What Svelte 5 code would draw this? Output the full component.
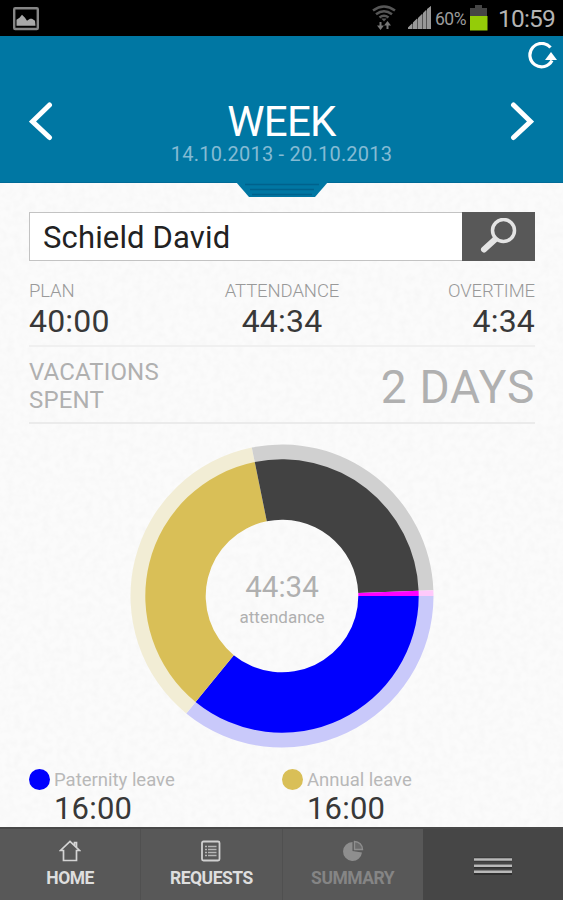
<script>
  const stats = [
    { label: 'PLAN', value: '40:00' },
    { label: 'ATTENDANCE', value: '44:34' },
    { label: 'OVERTIME', value: '4:34' }
  ];
  const leaves = [
    { label: 'Paternity leave', value: '16:00', color: '#0000fe' },
    { label: 'Annual leave', value: '16:00', color: '#d9bf57' }
  ];
  const slices = [
    { from: 0, to: 129.2, color: '#0000fe', halo: '#c9c9fa' },
    { from: 129.2, to: 258.5, color: '#d9bf57', halo: '#f2edd5' },
    { from: 258.5, to: 357.8, color: '#424242', halo: '#d0d0d0' },
    { from: 357.8, to: 360, color: '#ff00ff', halo: '#ffc9fb' }
  ];

  function point(r, deg) {
    const a = (deg * Math.PI) / 180;
    return `${(152 + r * Math.cos(a)).toFixed(2)} ${(152 + r * Math.sin(a)).toFixed(2)}`;
  }

  function ring(inner, outer, from, to) {
    const large = to - from > 180 ? 1 : 0;
    return `M${point(outer, from)}A${outer} ${outer} 0 ${large} 1 ${point(outer, to)}L${point(inner, to)}A${inner} ${inner} 0 ${large} 0 ${point(inner, from)}Z`;
  }
</script>

<div class="screen">
  <div class="status">
    <svg class="picture" width="28" height="24" viewBox="0 0 28 24">
      <rect x="2.2" y="1.2" width="23.6" height="20.8" rx="1" fill="#000" stroke="#858585" stroke-width="2.4" />
      <path d="M4.500 18.800v-6l3-2 2.500-3 3 3 2 3 3-2 2 0 3 2 .5 5z" fill="#a8a8a8" />
    </svg>
    <svg class="wifi" width="26" height="26" viewBox="0 0 26 26" fill="none">
      <path d="M2 5.5q11-8 22 0M5 9.2q8-6 16 0M8.500 12.500q4.500-3.500 9 0" stroke="#565656" stroke-width="2.5" />
      <path d="M10.300 13.500h5.400l-2.700 3z" fill="#565656" />
      <path d="M9.500 17v4M16.500 24v-5" stroke="#777" stroke-width="2" />
      <path d="M6 20.500h7l-3.500 4.500zM13 20.500h7l-3.500-4.500z" fill="#777" />
    </svg>
    <svg class="signal" width="24" height="24" viewBox="0 0 24 24">
      <path d="M0 23v-1L23 0v23z" fill="#555" />
      <path d="M0 23v-1.500l4-4v5.500zM5 23v-6.500l4-4v10.500zM10 23v-11l4-4v15zM15 23v-16l3-3v19zM19 23v-20l4-3v23z" fill="#989898" />
    </svg>
    <span class="percent">60%</span>
    <svg class="battery" width="18" height="26" viewBox="0 0 18 26">
      <path d="M5 0h7v3h5v9H0V3h5z" fill="#454545" />
      <rect y="11" width="17.500" height="14.500" fill="#94cc08" />
    </svg>
    <span class="clock">10:59</span>
  </div>

  <header>
    <svg class="refresh" width="30" height="28" viewBox="0 0 30 28" fill="none">
      <path d="M22.500 5.500A11.700 11.700 0 1 0 24 18.500" stroke="#fff" stroke-width="3.200" />
      <path d="M17 18h12l-6-8z" fill="#fff" />
    </svg>
    <svg class="arrow" width="24" height="40" viewBox="0 0 24 40">
      <path d="M20.500 4L3.500 20.500l17 16" fill="none" stroke="#fff" stroke-width="5" stroke-linecap="round" />
    </svg>
    <div class="period">
      <h1>WEEK</h1>
      <p>14.10.2013 - 20.10.2013</p>
    </div>
    <svg class="arrow" width="24" height="40" viewBox="0 0 24 40">
      <path d="M3.500 4l17 16.500l-17 16" fill="none" stroke="#fff" stroke-width="5" stroke-linecap="round" />
    </svg>
    <svg class="handle" width="92" height="15" viewBox="0 0 92 15">
      <path d="M0 0h92L79 15H13z" fill="#0077a3" />
      <path d="M9 2.500h74M14 7.500h64M16 12.500h60" stroke="#00628c" stroke-width="1.700" />
    </svg>
  </header>

  <main>
    <svg class="paper" width="563" height="644">
      <filter id="grain" x="0" y="0" width="100%" height="100%">
        <feTurbulence type="fractalNoise" baseFrequency="0.14" numOctaves="2" seed="4" />
        <feColorMatrix values="0 0 0 0 0.4  0 0 0 0 0.4  0 0 0 0 0.4  0.09 0 0 0 -0.03" />
      </filter>
      <rect width="563" height="644" filter="url(#grain)" />
    </svg>

    <div class="search">
      <div class="field">Schield David</div>
      <div class="go">
        <svg width="40" height="36" viewBox="0 0 40 36" fill="none" stroke="#e4e4e4">
          <circle cx="24.500" cy="12.500" r="11" stroke-width="3.500" />
          <path d="M16 21.500L5 31.500" stroke-width="6" stroke-linecap="round" />
        </svg>
      </div>
    </div>

    <div class="stats">
      {#each stats as s}
        <div class="stat">
          <span class="label">{s.label}</span>
          <span class="value">{s.value}</span>
        </div>
      {/each}
    </div>

    <div class="vacations">
      <span class="spent">VACATIONS<br />SPENT</span>
      <span class="days">2 DAYS</span>
    </div>

    <div class="chart">
      <svg width="304" height="304" viewBox="0 0 304 304">
        {#each slices as s}
          <path d={ring(136, 151.5, s.from, s.to)} fill={s.halo} />
          <path d={ring(76.300, 136.700, s.from, s.to)} fill={s.color} />
        {/each}
      </svg>
      <div class="total">
        <span class="hours">44:34</span>
        <span class="caption">attendance</span>
      </div>
    </div>

    <div class="legend">
      {#each leaves as l}
        <div class="leave">
          <i style:background={l.color}></i>
          <div>
            <span class="name">{l.label}</span>
            <span class="value">{l.value}</span>
          </div>
        </div>
      {/each}
    </div>
  </main>

  <nav>
    <div class="tab">
      <svg width="22" height="22" viewBox="0 0 22 22" fill="none" stroke="#d4d4d4" stroke-width="1.700">
        <path d="M4.500 10.500H1.500L11 1.500l9.500 9h-3V20.500h-13z M15.500 5V2.500h2V7" />
      </svg>
      <span>HOME</span>
    </div>
    <div class="tab">
      <svg width="22" height="22" viewBox="0 0 22 22" fill="none" stroke="#d0d0d0">
        <rect x="2" y="1.500" width="17.500" height="19" rx="1.500" stroke-width="1.800" />
        <path d="M5 6.500h2M5 9.500h2M5 12.500h2M5 15.500h2M8 6.500h8.500M8 9.500h8.500M8 12.500h8.500M8 15.500h8.500" stroke-width="1.500" stroke="#b5b5b5" />
      </svg>
      <span>REQUESTS</span>
    </div>
    <div class="tab current">
      <svg width="22" height="22" viewBox="0 0 22 22">
        <path d="M10.500 2A9.500 9.500 0 1 0 20 12.500L10.500 11z" fill="#8e8e8e" />
        <path d="M12.500 1.500A8 8 0 0 1 20.500 9.500H12.500z" fill="#6c6c6c" stroke="#8e8e8e" stroke-width="1.400" />
      </svg>
      <span>SUMMARY</span>
    </div>
    <div class="tab menu">
      <svg width="38" height="18" viewBox="0 0 38 18">
        <path d="M0 2.500h38M0 9.500h38M0 16h38" stroke="#303030" stroke-width="4" />
        <path d="M0 2.500h38M0 8.800h38M0 14.800h38" stroke="#b9b9b9" stroke-width="2.600" />
      </svg>
    </div>
  </nav>
</div>

<style>
  :global(body) {
    margin: 0;
  }
  .screen {
    width: 563px;
    height: 900px;
    overflow: hidden;
    display: flex;
    flex-direction: column;
    background: #fbfbfb;
    font-family: Roboto, sans-serif;
  }
  svg {
    display: block;
    flex: none;
  }
  span, p, h1 {
    white-space: nowrap;
  }
  .status {
    flex: none;
    height: 36px;
    box-sizing: border-box;
    padding: 0 8px 0 12px;
    display: flex;
    align-items: center;
    background: #000;
    color: #b4b4b4;
  }
  .picture {
    margin: 2px auto 0 0;
  }
  .wifi {
    margin: 0 11px 0 0;
  }
  .signal {
    margin: 0 3px 0 0;
  }
  .percent {
    width: 35px;
    font-size: 17.5px;
    color: #9b9b9b;
    letter-spacing: -0.5px;
    padding-top: 1px;
  }
  .battery {
    margin: 0 10px 0 0;
  }
  .clock {
    width: 57px;
    font-size: 24.5px;
    letter-spacing: -0.8px;
    text-align: right;
    padding-top: 1px;
  }
  header {
    position: relative;
    flex: none;
    height: 147px;
    box-sizing: border-box;
    padding: 61px 29px 0;
    display: flex;
    justify-content: space-between;
    align-items: flex-start;
    background: #0077a3;
    border-bottom: 1px solid #006b97;
  }
  .arrow {
    margin-top: 4px;
  }
  .refresh {
    position: absolute;
    top: 6px;
    right: 5px;
  }
  .period {
    text-align: center;
  }
  h1 {
    margin: 0;
    font-size: 42px;
    line-height: 48px;
    font-weight: 400;
    letter-spacing: -0.7px;
    color: #fff;
    padding-top: 1px;
  }
  p {
    margin: 0;
    font-size: 20px;
    line-height: 16px;
    letter-spacing: 0.22px;
    color: #84bbd4;
  }
  .handle {
    position: absolute;
    top: 146px;
    left: 236px;
    z-index: 2;
  }
  main {
    position: relative;
    flex: none;
    height: 644px;
    box-sizing: border-box;
    padding: 29px 28px 0 29px;
  }
  .paper {
    position: absolute;
    top: 0;
    left: 0;
  }
  main > div {
    position: relative;
  }
  .search {
    display: flex;
    height: 49px;
  }
  .field {
    flex: 1;
    box-sizing: border-box;
    border: 1px solid #c3c3c3;
    border-right: 0;
    background: #fff;
    padding-left: 13px;
    font-size: 31px;
    line-height: 49px;
    letter-spacing: 0.15px;
    color: #222;
  }
  .go {
    width: 73px;
    background: #585858;
    display: flex;
    align-items: center;
    justify-content: center;
  }
  .go svg {
    margin-top: -2px;
  }
  .stats {
    display: flex;
    justify-content: space-between;
    height: 86px;
    box-sizing: border-box;
    padding-top: 19px;
    border-bottom: 2px solid #f0f0f0;
  }
  .stat {
    display: flex;
    flex-direction: column;
    flex: 1;
    align-items: center;
  }
  .stat:first-child {
    align-items: flex-start;
  }
  .stat:last-child {
    align-items: flex-end;
  }
  .label {
    font-size: 18.5px;
    line-height: 22px;
    font-weight: 300;
    letter-spacing: -0.1px;
    color: #999;
  }
  .value {
    display: block;
    font-size: 32px;
    line-height: 38px;
    font-weight: 400;
    letter-spacing: 0.2px;
    color: #383838;
  }
  .vacations {
    height: 77px;
    box-sizing: border-box;
    display: flex;
    justify-content: space-between;
    align-items: center;
    border-bottom: 2px solid #ebebeb;
    color: #b0b0b0;
  }
  .spent {
    font-size: 24px;
    line-height: 28px;
    letter-spacing: 0.15px;
    padding-top: 2px;
  }
  .days {
    font-size: 46px;
    line-height: 54px;
    letter-spacing: 0.8px;
    padding-top: 4px;
  }
  .chart {
    width: 304px;
    height: 304px;
    margin: 20px 0 0 101px;
  }
  .total {
    position: absolute;
    inset: 0;
    display: flex;
    flex-direction: column;
    align-items: center;
    padding-top: 125px;
    color: #b0b0b0;
  }
  .hours {
    font-size: 29.5px;
    line-height: 36px;
  }
  .caption {
    font-size: 17px;
    line-height: 24px;
    letter-spacing: 0;
  }
  .legend {
    display: flex;
    margin-top: 21px;
  }
  .leave {
    width: 253px;
    display: flex;
    gap: 4px;
  }
  .leave i {
    width: 21px;
    height: 21px;
    border-radius: 50%;
  }
  .name {
    display: block;
    font-size: 18.5px;
    line-height: 22px;
    color: #b8b8b8;
  }
  .leave .value {
    font-size: 31px;
    line-height: 36px;
  }
  nav {
    flex: none;
    height: 73px;
    display: flex;
    box-sizing: border-box;
    border-top: 2px solid #484848;
    background: #585858;
    color: #dedede;
  }
  .tab {
    flex: 1;
    box-sizing: border-box;
    border-right: 1px solid #505050;
    display: flex;
    flex-direction: column;
    align-items: center;
    padding-top: 11px;
    font-size: 17.5px;
    line-height: 22px;
    font-weight: 700;
    letter-spacing: -0.5px;
  }
  .tab span {
    margin-top: 5px;
  }
  .current {
    color: #858585;
    border-right: 0;
  }
  .menu {
    background: #464646;
    border-right: 0;
    padding-top: 28px;
  }
</style>
